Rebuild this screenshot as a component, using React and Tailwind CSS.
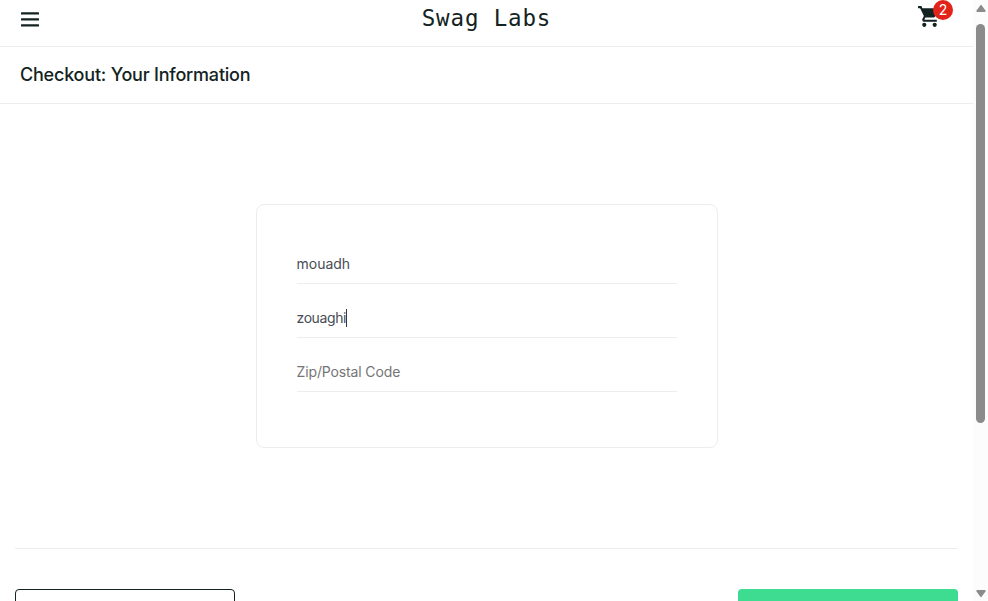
function Header() {
  return (
    <header className="shrink-0">
      <div className="flex h-[47px] items-start justify-between border-b border-[#ededed] pl-5 pr-[20px]">
        <button aria-label="Open Menu" className="mt-[12px] flex h-[15px] w-[20px]">
          <svg width="20" height="15" viewBox="0 0 20 15" fill="#132322">
            <rect x="1" y="0.2" width="18" height="2.2" rx=".5" />
            <rect x="1" y="6.2" width="18" height="2.2" rx=".5" />
            <rect x="1" y="12.2" width="18" height="2.2" rx=".5" />
          </svg>
        </button>
        <div className="ml-[16px] font-['DejaVu_Sans_Mono','Liberation_Mono',monospace] text-[22.5px] leading-[36px] tracking-[0.85px] text-[#132322]">
          Swag Labs
        </div>
        <a aria-label="Cart" className="relative flex h-[30px] w-[36px]">
          <svg className="mt-[4px]" width="25" height="25" viewBox="0 0 24 24" fill="#132322">
            <path d="M7 18c-1.1 0-1.99.9-1.99 2S5.9 22 7 22s2-.9 2-2-.9-2-2-2zM1 2v2h2l3.6 7.59-1.35 2.45c-.16.28-.25.61-.25.96 0 1.1.9 2 2 2h12v-2H7.42c-.14 0-.25-.11-.25-.25l.03-.12.9-1.63h7.45c.75 0 1.41-.41 1.75-1.03l3.58-6.49A1 1 0 0 0 20 4H5.21l-.94-2H1zm16 16c-1.1 0-1.99.9-1.99 2s.89 2 1.99 2 2-.9 2-2-.9-2-2-2z" />
          </svg>
          <span className="absolute right-0 top-0 flex h-[20px] w-[20px] items-center justify-center rounded-full bg-[#e2231a] text-[14px] leading-none text-white">
            2
          </span>
        </a>
      </div>
      <div className="flex h-[57px] items-center border-b border-[#ededed] pl-5">
        <span className="text-[18px] font-medium leading-none tracking-[-0.21px] text-[#132322]">
          Checkout: Your Information
        </span>
      </div>
    </header>
  );
}

function Field({ children }) {
  return (
    <div className="mb-[15px] flex h-[39px] items-center border-b border-[#ededed] text-[14px] leading-[18px]">
      {children}
    </div>
  );
}

function Scrollbar() {
  return (
    <div className="flex w-[15px] shrink-0 flex-col items-center bg-[#fcfcfc]">
      <svg className="mt-[4px] shrink-0" width="10" height="8" viewBox="0 0 10 8" fill="#8b8b8b">
        <path d="M4.2 1.4Q5 .3 5.8 1.4L9.5 6.6Q9.8 8 9 8H1Q.2 8 .5 6.6Z" />
      </svg>
      <div className="mt-[12px] h-[399px] w-[9px] shrink-0 rounded-full bg-[#8b8b8b]" />
      <svg className="mb-[3px] mt-auto shrink-0" width="10" height="8" viewBox="0 0 10 8" fill="#8b8b8b">
        <path d="M4.2 6.6Q5 7.7 5.8 6.6L9.5 1.4Q9.8 0 9 0H1Q.2 0 .5 1.4Z" />
      </svg>
    </div>
  );
}

export default function App() {
  return (
    <div className="flex h-screen w-full overflow-hidden bg-white font-['Inter','Liberation_Sans',sans-serif]">
      <div className="flex min-w-0 flex-1 flex-col overflow-hidden">
        <Header />
        <main className="flex flex-col">
          <form className="ml-[256px] mt-[100px] h-[244px] w-[462px] shrink-0 rounded-[8px] border border-[#ededed] px-[40px] pt-[40px]">
            <Field>
              <span className="-ml-[0.5px] text-[#484c55]">mouadh</span>
            </Field>
            <Field>
              <span className="-ml-[0.5px] tracking-[-0.4px] text-[#484c55]">zouaghi</span>
              <span className="h-[18px] w-px bg-[#33373f]" />
            </Field>
            <Field>
              <span className="-ml-[0.5px] tracking-[-0.13px] text-[#757575]">Zip/Postal Code</span>
            </Field>
          </form>
          <div className="mx-[15px] mt-[100px] flex justify-between border-t border-[#ededed] pt-[40px]">
            <div className="h-[44px] w-[220px] rounded-[4px] border border-[#132322] bg-white" />
            <div className="h-[44px] w-[220px] rounded-[4px] bg-[#3ddc91]" />
          </div>
        </main>
      </div>
      <Scrollbar />
    </div>
  );
}
